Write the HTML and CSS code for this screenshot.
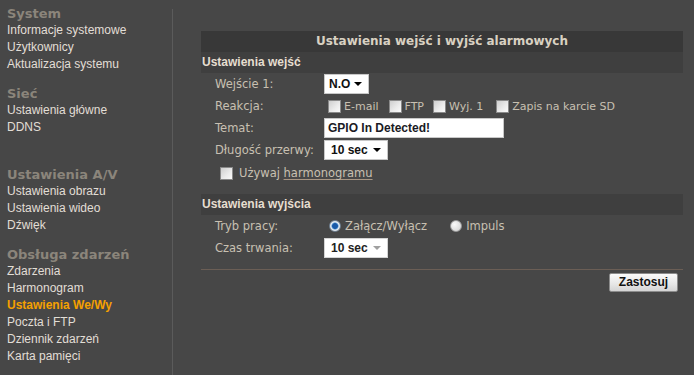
FILE: index.html
```html
<!DOCTYPE html>
<html lang="pl">
<head>
<meta charset="utf-8">
<title>Ustawienia We/Wy</title>
<link rel="stylesheet" href="styles.css">
</head>
<body>
<div class="page">
  <nav class="sidebar">
    <div class="group">
      <div class="heading">System</div>
      <a class="item">Informacje systemowe</a>
      <a class="item">Użytkownicy</a>
      <a class="item">Aktualizacja systemu</a>
    </div>
    <div class="group">
      <div class="heading">Sieć</div>
      <a class="item">Ustawienia główne</a>
      <a class="item">DDNS</a>
    </div>
    <div class="group group-wide">
      <div class="heading">Ustawienia A/V</div>
      <a class="item">Ustawienia obrazu</a>
      <a class="item">Ustawienia wideo</a>
      <a class="item">Dźwięk</a>
    </div>
    <div class="group">
      <div class="heading">Obsługa zdarzeń</div>
      <a class="item">Zdarzenia</a>
      <a class="item">Harmonogram</a>
      <a class="item active">Ustawienia We/Wy</a>
      <a class="item">Poczta i FTP</a>
      <a class="item">Dziennik zdarzeń</a>
      <a class="item">Karta pamięci</a>
    </div>
  </nav>
  <div class="divider"></div>
  <main class="main">
    <div class="title">Ustawienia wejść i wyjść alarmowych</div>
    <div class="section">Ustawienia wejść</div>
    <div class="row">
      <span class="label">Wejście 1:</span>
      <span class="select w-no"><span class="val">N.O</span><span class="arrow"></span></span>
    </div>
    <div class="row">
      <span class="label">Reakcja:</span>
      <span class="checks">
        <span class="opt"><span class="cb"></span>E-mail</span>
        <span class="opt"><span class="cb"></span>FTP</span>
        <span class="opt"><span class="cb"></span>Wyj. 1</span>
        <span class="opt"><span class="cb"></span>Zapis na karcie SD</span>
      </span>
    </div>
    <div class="row">
      <span class="label">Temat:</span>
      <span class="input">GPIO In Detected!</span>
    </div>
    <div class="row">
      <span class="label">Długość przerwy:</span>
      <span class="select w-sec"><span class="val">10 sec</span><span class="arrow"></span></span>
    </div>
    <div class="row row-sched">
      <span class="cb"></span><span class="sched-text">Używaj <u class="link">harmonogramu</u></span>
    </div>
    <div class="section section-out">Ustawienia wyjścia</div>
    <div class="row">
      <span class="label">Tryb pracy:</span>
      <span class="radios">
        <span class="opt"><span class="rb on"></span>Załącz/Wyłącz</span>
        <span class="opt"><span class="rb"></span>Impuls</span>
      </span>
    </div>
    <div class="row">
      <span class="label">Czas trwania:</span>
      <span class="select w-sec disabled"><span class="val">10 sec</span><span class="arrow"></span></span>
    </div>
    <div class="rule"></div>
    <div class="actions"><button class="btn">Zastosuj</button></div>
  </main>
</div>
</body>
</html>
```

FILE: styles.css
```css
html, body {
  margin: 0;
  padding: 0;
  background: #474747;
  height: 100%;
}
.page {
  display: flex;
  align-items: flex-start;
  height: 375px;
  overflow: hidden;
}
.sidebar {
  width: 165px;
  padding: 5px 0 0 7px;
  display: flex;
  flex-direction: column;
  font-family: "Liberation Sans", Arial, sans-serif;
}
.group {
  display: flex;
  flex-direction: column;
  margin-top: 12px;
}
.group:first-child { margin-top: 0; }
.group-wide { margin-top: 30px; }
.heading {
  font-family: "DejaVu Sans", Verdana, sans-serif;
  font-weight: bold;
  font-size: 13px;
  line-height: 17px;
  color: #8b857b;
}
.item {
  font-size: 12px;
  line-height: 17px;
  color: #e2ded6;
  white-space: nowrap;
}
.item.active {
  color: #f5a000;
  font-weight: bold;
}
.divider {
  width: 1px;
  height: 366px;
  margin-top: 9px;
  background: #5b5b5b;
}
.main {
  width: 482px;
  margin-left: 28px;
  padding-top: 31px;
  display: flex;
  flex-direction: column;
  font-family: "DejaVu Sans", Verdana, sans-serif;
  font-size: 11.5px;
  color: #c8c0b2;
}
.title {
  height: 21px;
  line-height: 21px;
  background: #383838;
  text-align: center;
  font-weight: bold;
  font-size: 12px;
  color: #d9d1c2;
}
.section {
  height: 21px;
  line-height: 21px;
  background: #3f3f3f;
  padding-left: 1px;
  font-family: "Liberation Sans", Arial, sans-serif;
  font-weight: bold;
  font-size: 12px;
  color: #e6ded0;
}
.section-out { margin-top: 9px; }
.row {
  height: 22px;
  display: flex;
  align-items: center;
  padding-left: 14px;
}
.label {
  width: 109px;
  flex: none;
}
.select {
  background: #fff;
  border: 1px solid #c8c8c8;
  display: flex;
  align-items: center;
  justify-content: space-between;
  padding: 0 6px 0 4px;
  box-sizing: border-box;
  height: 20px;
  font-family: "Liberation Sans", Arial, sans-serif;
  font-weight: bold;
  font-size: 12px;
  color: #111;
}
.w-no { width: 45px; }
.w-sec { width: 64px; padding-left: 6px; }
.arrow {
  width: 0;
  height: 0;
  border-left: 4px solid transparent;
  border-right: 4px solid transparent;
  border-top: 4px solid #000;
}
.select.disabled { border-color: #d4d4d4; }
.select.disabled .val { color: #222; }
.select.disabled .arrow { border-top-color: #a0a0a0; }
.checks, .radios {
  display: flex;
  align-items: center;
}
.checks { font-size: 11px; }
.opt {
  display: flex;
  align-items: center;
  white-space: nowrap;
}
.checks .opt:nth-child(1) { margin-right: 6px; }
.checks .opt:nth-child(2) { margin-right: 5px; }
.checks .opt:nth-child(3) { margin-right: 9px; }
.cb {
  width: 11px;
  height: 11px;
  border: 1px solid #8a8a8a;
  background: linear-gradient(135deg, #cfcfcf 0%, #ececec 60%, #fafafa 100%);
  margin: 0 3px 0 4px;
  flex: none;
}
.rb {
  width: 10px;
  height: 10px;
  border: 1px solid #9a9a9a;
  border-radius: 50%;
  background: radial-gradient(circle at 35% 35%, #fafafa, #cfcfcf);
  margin: 0 4px 0 5px;
  flex: none;
}
.rb.on {
  border-color: #6f7f8f;
  background: radial-gradient(circle at 50% 50%, #1a5aa8 0 2.5px, #4d8fd0 3px, #e8eef4 4px, #cfd6de 100%);
}
.radios .opt { margin-right: 18px; }
.input {
  width: 180px;
  height: 20px;
  box-sizing: border-box;
  background: #fff;
  border: 1px solid #c8c8c8;
  padding: 0 3px;
  line-height: 18px;
  font-family: "Liberation Sans", Arial, sans-serif;
  font-weight: bold;
  font-size: 12px;
  color: #1a1a24;
}
.row-sched {
  height: 24px;
  padding-left: 15px;
}
.row-sched .cb { margin: 0 6px 0 4px; }
.link {
  text-decoration: underline;
  text-decoration-color: #a89684;
  text-underline-offset: 2px;
}
.rule {
  height: 1px;
  background: #6b5e55;
  margin-top: 10px;
}
.actions {
  display: flex;
  justify-content: flex-end;
  padding: 3px 5px 0 0;
}
.btn {
  width: 69px;
  height: 19px;
  padding: 0;
  border: 1px solid #8c8c8c;
  border-radius: 2px;
  background: linear-gradient(#fbfbfb, #e6e6e6 60%, #d4d4d4);
  font-family: "Liberation Sans", Arial, sans-serif;
  font-weight: bold;
  font-size: 12px;
  color: #111;
  line-height: 17px;
}
```
